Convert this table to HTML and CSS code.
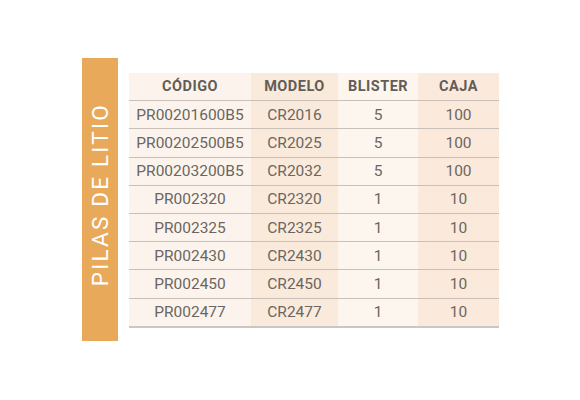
FILE: index.html
```html
<!DOCTYPE html>
<html>
<head>
<meta charset="utf-8">
<link rel="stylesheet" href="styles.css">
</head>
<body>
<div class="page">
  <div class="band"><span class="band-text">PILAS DE LITIO</span></div>
  <table class="grid">
    <thead>
      <tr><th class="c1">CÓDIGO</th><th class="c2">MODELO</th><th class="c3">BLISTER</th><th class="c4">CAJA</th></tr>
    </thead>
    <tbody>
      <tr><td class="c1">PR00201600B5</td><td class="c2">CR2016</td><td class="c3">5</td><td class="c4">100</td></tr>
      <tr><td class="c1">PR00202500B5</td><td class="c2">CR2025</td><td class="c3">5</td><td class="c4">100</td></tr>
      <tr><td class="c1">PR00203200B5</td><td class="c2">CR2032</td><td class="c3">5</td><td class="c4">100</td></tr>
      <tr><td class="c1">PR002320</td><td class="c2">CR2320</td><td class="c3">1</td><td class="c4">10</td></tr>
      <tr><td class="c1">PR002325</td><td class="c2">CR2325</td><td class="c3">1</td><td class="c4">10</td></tr>
      <tr><td class="c1">PR002430</td><td class="c2">CR2430</td><td class="c3">1</td><td class="c4">10</td></tr>
      <tr><td class="c1">PR002450</td><td class="c2">CR2450</td><td class="c3">1</td><td class="c4">10</td></tr>
      <tr class="last"><td class="c1">PR002477</td><td class="c2">CR2477</td><td class="c3">1</td><td class="c4">10</td></tr>
    </tbody>
  </table>
</div>
</body>
</html>
```
FILE: styles.css
```css
html, body {
  margin: 0;
  padding: 0;
  background: #ffffff;
}
body {
  width: 580px;
  height: 400px;
  overflow: hidden;
  font-family: Roboto, "Liberation Sans", sans-serif;
}
.page {
  display: flex;
  align-items: flex-start;
  gap: 11px;
  padding: 58px 0 0 82px;
}
.band {
  width: 36px;
  height: 283px;
  background: #e9a95b;
  display: flex;
  align-items: center;
  justify-content: center;
}
.band-text {
  writing-mode: vertical-rl;
  transform: rotate(180deg);
  color: #ffffff;
  font-size: 22.5px;
  font-weight: 400;
  letter-spacing: 2.2px;
  white-space: nowrap;
  margin-bottom: 9px;
}
.grid {
  margin-top: 15px;
  border-collapse: collapse;
  color: #6b6661;
  font-size: 15.5px;
  font-weight: 400;
}
.grid th, .grid td {
  padding: 0;
  text-align: center;
  height: 27.2px;
  border-bottom: 1.2px solid #c9c1b9;
}
.grid th {
  font-size: 14.5px;
  font-weight: 700;
  color: #625d58;
  letter-spacing: 0.5px;
}
.grid .last td {
  border-bottom: 2px solid #cbc6c1;
}
.c1 { width: 122px; background: #fcf4ec; }
.c2 { width: 87px; background: #faeadb; }
.c3 { width: 80px; background: #fdf6ef; }
.c4 { width: 81px; background: #fbeadb; }
```
